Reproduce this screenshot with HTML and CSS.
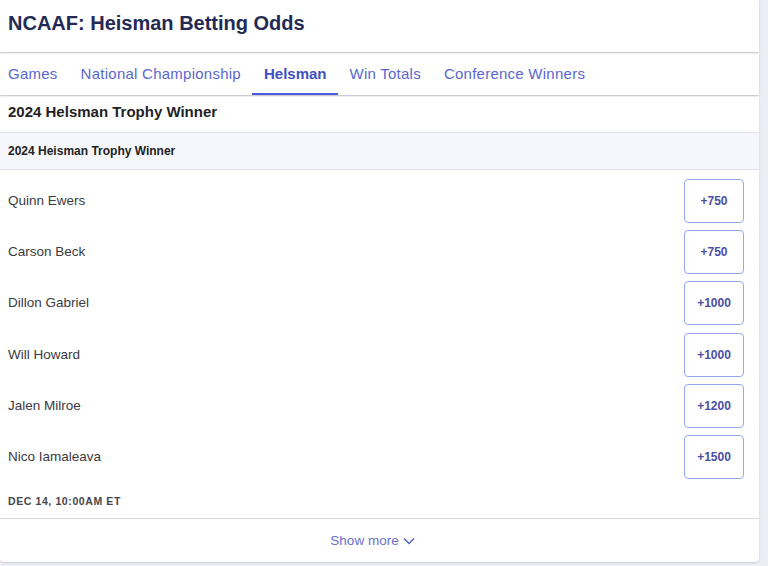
FILE: index.html
```html
<!DOCTYPE html>
<html>
<head>
<meta charset="utf-8">
<link rel="stylesheet" href="styles.css">
</head>
<body>
<div class="page">
  <header class="header">
    <h1 class="title">NCAAF: Heisman Betting Odds</h1>
  </header>
  <nav class="tabs">
    <a class="tab">Games</a>
    <a class="tab">National Championship</a>
    <a class="tab active">Helsman</a>
    <a class="tab">Win Totals</a>
    <a class="tab">Conference Winners</a>
  </nav>
  <section class="card">
    <h2 class="card-title">2024 Helsman Trophy Winner</h2>
    <div class="subhead">2024 Heisman Trophy Winner</div>
    <div class="rows">
      <div class="row"><span class="name">Quinn Ewers</span><button class="odds">+750</button></div>
      <div class="row"><span class="name">Carson Beck</span><button class="odds">+750</button></div>
      <div class="row"><span class="name">Dillon Gabriel</span><button class="odds">+1000</button></div>
      <div class="row"><span class="name">Will Howard</span><button class="odds">+1000</button></div>
      <div class="row"><span class="name">Jalen Milroe</span><button class="odds">+1200</button></div>
      <div class="row"><span class="name">Nico Iamaleava</span><button class="odds">+1500</button></div>
    </div>
    <div class="date">DEC 14, 10:00AM ET</div>
    <div class="more">Show more <svg class="chev" width="12" height="8" viewBox="0 0 12 8"><path d="M1 1.5 L6 6.5 L11 1.5" fill="none" stroke="currentColor" stroke-width="1.5"/></svg></div>
  </section>
</div>
</body>
</html>
```
FILE: styles.css
```css
* { box-sizing: border-box; }
html, body { margin: 0; padding: 0; }
body {
  background: #eceef6;
  font-family: "Liberation Sans", Arial, sans-serif;
  width: 768px;
  height: 566px;
  overflow: hidden;
}
.page { width: 759px; }
.header {
  background: #fff;
  height: 52px;
  padding: 0 8px;
  display: flex;
  align-items: center;
  box-shadow: 0 1px 2px rgba(0,0,0,0.18);
  position: relative;
  z-index: 2;
}
.title {
  margin: 0;
  font-size: 20px;
  font-weight: 700;
  color: #232a55;
  padding-bottom: 6px;
}
.tabs {
  margin-top: 1px;
  background: #fff;
  height: 42px;
  display: flex;
  box-shadow: 0 1px 2px rgba(0,0,0,0.2);
  position: relative;
  z-index: 1;
}
.tab {
  font-size: 15px;
  letter-spacing: 0.25px;
  color: #5a67d2;
  padding: 0 11.5px;
  display: flex;
  align-items: center;
  height: 42px;
  border-bottom: 2px solid transparent;
}
.tab:first-child { padding-left: 8px; }
.tab.active {
  font-weight: 700;
  letter-spacing: 0;
  color: #3f4fc4;
  border-bottom-color: #4a5ae0;
}
.card {
  margin-top: 1px;
  background: #fff;
  border-radius: 0 0 4px 4px;
  box-shadow: 0 1px 2px rgba(0,0,0,0.15);
  height: 466px;
}
.card-title {
  margin: 0;
  height: 37px;
  padding: 0 8px 6px;
  display: flex;
  align-items: center;
  font-size: 15px;
  font-weight: 700;
  color: #1f1f24;
  border-bottom: 1px solid #e3e4ea;
}
.subhead {
  height: 37px;
  background: #f6f7fc;
  border-bottom: 1px solid #dcdfea;
  display: flex;
  align-items: center;
  padding: 0 8px;
  font-size: 12px;
  font-weight: 700;
  color: #222;
}
.rows {
  padding: 9px 15px 0 8px;
  display: flex;
  flex-direction: column;
  gap: 7.2px;
}
.row {
  height: 44px;
  display: flex;
  align-items: center;
  justify-content: space-between;
}
.name {
  font-size: 13.5px;
  color: #3a3a3f;
  margin-top: -1px;
}
.odds {
  width: 60px;
  height: 44px;
  background: #fff;
  border: 1px solid #93a7f7;
  border-radius: 4px;
  font-family: inherit;
  font-size: 12px;
  font-weight: 700;
  color: #4a4ea6;
  padding: 0;
}
.date {
  height: 40px;
  padding: 6px 8px 0;
  display: flex;
  align-items: center;
  font-size: 10.5px;
  font-weight: 700;
  letter-spacing: 0.6px;
  color: #45454b;
  border-bottom: 1px solid #d9dae0;
}
.more {
  height: 43px;
  display: flex;
  align-items: center;
  justify-content: center;
  gap: 4px;
  font-size: 13.5px;
  color: #6a6fd0;
  padding-right: 14px;
}
.chev { color: #5a60c8; margin-top: 1px; }
```
